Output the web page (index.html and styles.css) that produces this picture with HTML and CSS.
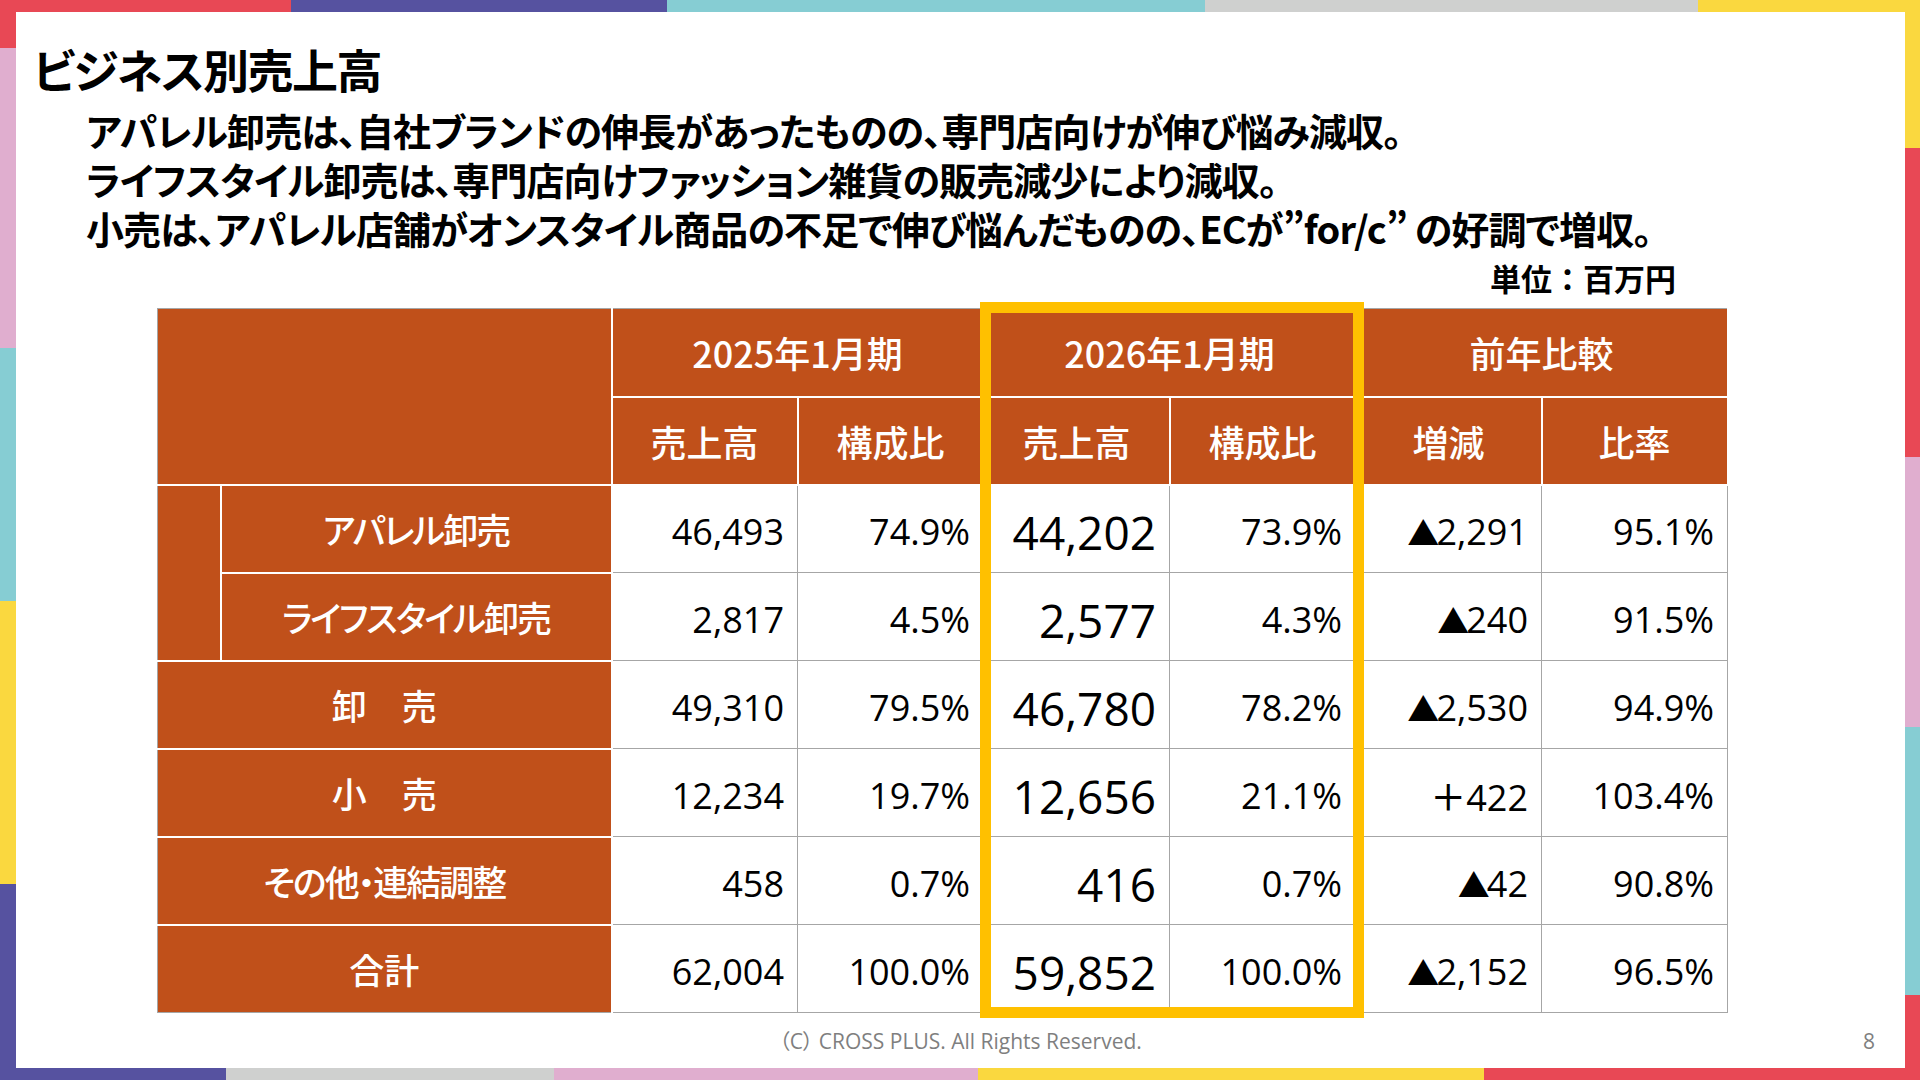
FILE: index.html
```html
<!DOCTYPE html>
<html lang="ja">
<head>
  <meta charset="UTF-8" />
  <meta name="viewport" content="width=device-width, initial-scale=1" />
  <title>ビジネス別売上高</title>
  <link rel="stylesheet" href="styles.css">
</head>
<body>

  <div class="slide">
    <div class="page">
      <h1 class="title">ビジネス別売上高</h1>

      <div class="summary">
        <p>アパレル卸売は、自社ブランドの伸長があったものの、専門店向けが伸び悩み減収。</p>
        <p>ライフスタイル卸売は、専門店向けファッション雑貨の販売減少により減収。</p>
        <p>小売は、アパレル店舗がオンスタイル商品の不足で伸び悩んだものの、ECが”for/c” の好調で増収。</p>
      </div>

      <div class="unit">単位：百万円</div>

      <div class="table-wrap">
        <table class="sales">
          <colgroup>
            <col class="c-indent">
            <col class="c-label">
            <col class="c-num">
            <col class="c-num">
            <col class="c-num">
            <col class="c-num">
            <col class="c-num">
            <col class="c-num">
          </colgroup>
          <thead>
            <tr>
              <th class="corner" colspan="2" rowspan="2"></th>
              <th colspan="2">2025年1月期</th>
              <th colspan="2">2026年1月期</th>
              <th colspan="2">前年比較</th>
            </tr>
            <tr>
              <th>売上高</th>
              <th>構成比</th>
              <th>売上高</th>
              <th>構成比</th>
              <th>増減</th>
              <th>比率</th>
            </tr>
          </thead>
          <tbody>
            <tr>
              <th class="indent" rowspan="2"></th>
              <th class="label">アパレル卸売</th>
              <td>46,493</td>
              <td>74.9%</td>
              <td class="big">44,202</td>
              <td>73.9%</td>
              <td><span class="tri">▲</span>2,291</td>
              <td>95.1%</td>
            </tr>
            <tr>
              <th class="label">ライフスタイル卸売</th>
              <td>2,817</td>
              <td>4.5%</td>
              <td class="big">2,577</td>
              <td>4.3%</td>
              <td><span class="tri">▲</span>240</td>
              <td>91.5%</td>
            </tr>
            <tr>
              <th class="label wide" colspan="2">卸　売</th>
              <td>49,310</td>
              <td>79.5%</td>
              <td class="big">46,780</td>
              <td>78.2%</td>
              <td><span class="tri">▲</span>2,530</td>
              <td>94.9%</td>
            </tr>
            <tr>
              <th class="label wide" colspan="2">小　売</th>
              <td>12,234</td>
              <td>19.7%</td>
              <td class="big">12,656</td>
              <td>21.1%</td>
              <td>＋422</td>
              <td>103.4%</td>
            </tr>
            <tr>
              <th class="label" colspan="2">その他・連結調整</th>
              <td>458</td>
              <td>0.7%</td>
              <td class="big">416</td>
              <td>0.7%</td>
              <td><span class="tri">▲</span>42</td>
              <td>90.8%</td>
            </tr>
            <tr>
              <th class="label wide" colspan="2">合計</th>
              <td>62,004</td>
              <td>100.0%</td>
              <td class="big">59,852</td>
              <td>100.0%</td>
              <td><span class="tri">▲</span>2,152</td>
              <td>96.5%</td>
            </tr>
          </tbody>
        </table>
        <!-- 今期の列を囲む枠 -->
        <div class="highlight"></div>
      </div>

      <footer class="footer">
        <span></span>
        <span class="copy">（C） CROSS PLUS. All Rights Reserved.</span>
        <span class="page-no">8</span>
      </footer>
    </div>
  </div>

</body>
</html>
```

FILE: styles.css
```css
/* Reset básico */
* {
  margin: 0;
  padding: 0;
  box-sizing: border-box;
}

body {
  width: 1920px;
  height: 1080px;
  overflow: hidden;
  font-family: "Noto Sans CJK JP", "Noto Sans", sans-serif;
  color: #000;
  background: #fff;
}

/* Moldura colorida em volta do slide */
.slide {
  width: 1920px;
  height: 1080px;
  padding: 12px 15px 12px 16px;
  background:
    linear-gradient(to right, #e84855 0 291px, #5652a0 291px 667px, #86cdd3 667px 1205px, #cfd0cf 1205px 1698px, #fad83f 1698px) top / 100% 12px no-repeat,
    linear-gradient(to right, #5652a0 0 226px, #cfd0cf 226px 554px, #e0aecf 554px 978px, #fad83f 978px 1484px, #e84855 1484px) bottom / 100% 12px no-repeat,
    linear-gradient(to bottom, #e84855 0 48px, #e0aecf 48px 348px, #86cdd3 348px 601px, #fad83f 601px 884px, #5652a0 884px) left / 16px 100% no-repeat,
    linear-gradient(to bottom, #fad83f 0 148px, #e84855 148px 457px, #e0aecf 457px 727px, #86cdd3 727px 995px, #e84855 995px) right / 15px 100% no-repeat;
}

.page {
  height: 100%;
  background: #fff;
  display: flex;
  flex-direction: column;
  font-feature-settings: "palt";
}

.title {
  margin: 27px 0 0 17px;
  font-size: 46px;
  line-height: 58px;
  letter-spacing: -1.5px;
  font-weight: 700;
}

.summary {
  margin: 8px 0 0 70px;
  font-size: 38px;
  line-height: 49px;
  letter-spacing: -0.9px;
  font-weight: 700;
}

.unit {
  margin-top: 8px;
  padding-right: 229px;
  text-align: right;
  font-size: 31px;
  line-height: 36px;
  font-weight: 700;
  font-feature-settings: normal;
}

/* Tabela */
.table-wrap {
  position: relative;
  margin: 12px 0 0 141px;
  width: 1570px;
}

.sales {
  width: 1570px;
  border-collapse: collapse;
  table-layout: fixed;
  font-feature-settings: normal;
}

.c-indent { width: 63px; }
.c-label { width: 391px; }
.c-num { width: 186px; }

.sales tr {
  height: 88px;
}

.sales th {
  background: #c0501a;
  color: #fff;
  font-size: 36px;
  font-weight: 500;
  border: 2px solid #fff;
  text-align: center;
  vertical-align: middle;
  font-feature-settings: "palt";
}

.sales thead tr:first-child th {
  border-top: 1px solid #a6a6a6;
}

.sales th.corner,
.sales th.indent,
.sales tbody th[colspan] {
  border-left: 1px solid #a6a6a6;
}

.sales tbody tr:last-child th {
  border-bottom: 1px solid #a6a6a6;
}

.sales th.label {
  font-size: 35px;
  letter-spacing: -2px;
}

.sales th.label.wide {
  letter-spacing: 0;
}

.sales td {
  border: 1px solid #a6a6a6;
  text-align: right;
  padding: 6px 13px 0 0;
  font-family: "Open Sans", "Noto Sans CJK JP", sans-serif;
  font-size: 36px;
  font-weight: 500;
  vertical-align: middle;
  white-space: nowrap;
}

.sales td.big {
  font-size: 46px;
}

.tri {
  font-family: "Noto Sans CJK JP", sans-serif;
  font-size: 32px;
  letter-spacing: -3px;
}

.highlight {
  position: absolute;
  left: 823px;
  top: -6px;
  width: 384px;
  height: 716px;
  border: 11px solid #ffc000;
  pointer-events: none;
}

/* Rodapé */
.footer {
  margin-top: 15px;
  display: grid;
  grid-template-columns: 1fr auto 1fr;
  align-items: center;
  color: #7f7f7f;
  font-size: 21px;
  line-height: 26px;
}

.copy {
  font-family: "Open Sans", "Noto Sans CJK JP", sans-serif;
}

.page-no {
  justify-self: end;
  padding-right: 30px;
  font-family: "Open Sans", sans-serif;
}
```
